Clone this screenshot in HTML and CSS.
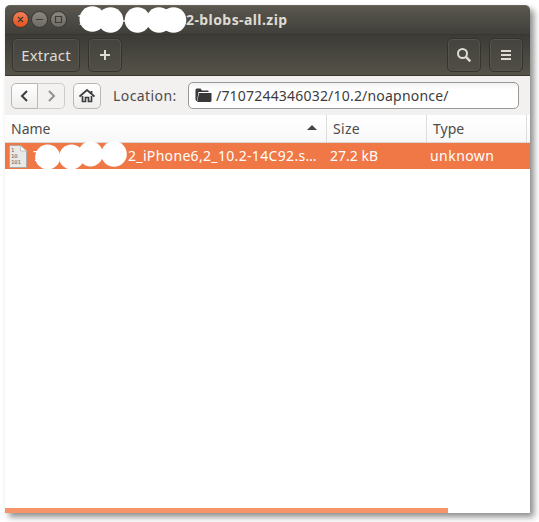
FILE: index.html
```html
<!DOCTYPE html>
<html lang="en">
<head>
<meta charset="utf-8">
<title>Archive Manager</title>
<link rel="stylesheet" href="styles.css">
</head>
<body>
<main class="window">
  <header class="titlebar">
    <svg class="controls" width="56" height="18" viewBox="0 0 56 18">
      <defs>
        <linearGradient id="close" x2="0" y2="1"><stop stop-color="#f58058"/><stop offset="1" stop-color="#e4501e"/></linearGradient>
        <linearGradient id="gray" x2="0" y2="1"><stop stop-color="#8b8981"/><stop offset="1" stop-color="#6c6a62"/></linearGradient>
      </defs>
      <g stroke="#35342f">
        <circle cx="8.5" cy="8.5" r="8" fill="url(#close)"/>
        <circle cx="27.5" cy="8.5" r="8" fill="url(#gray)"/>
        <circle cx="46.500" cy="8.5" r="8" fill="url(#gray)"/>
      </g>
      <path d="M6 6l5 5M11 6l-5 5M24 8.500h7M43.500 5.500h6v6h-6z" fill="none" stroke="#3c3b37" stroke-width="1.2"/>
    </svg>
    <div class="title"><span class="first">7</span><span class="title-rest">2-blobs-all.zip</span>
      <svg class="title-mask" width="108" height="28" viewBox="79 5 108 28" fill="#fff"><path d="M122 20h4v2h-4z" fill="#c4c1b8"/><circle cx="92.300" cy="19" r="12.800"/><circle cx="110.500" cy="20" r="12.800"/><circle cx="137.500" cy="20" r="12.800"/><circle cx="159" cy="20" r="12.800"/><circle cx="173.500" cy="20" r="12.800"/></svg>
    </div>
  </header>
  <nav class="toolbar">
    <button class="tool extract"><span>Extract</span></button>
    <button class="tool add"><svg width="12" height="12" viewBox="0 0 12 12"><path d="M6 1v10M1 6h10" stroke="#dfdbd2" stroke-width="2"/></svg></button>
    <span class="spacer"></span>
    <button class="tool search"><svg width="16" height="16" viewBox="0 0 16 16" fill="none" stroke="#dfdbd2"><circle cx="6.500" cy="6.500" r="4.500" stroke-width="2"/><path d="M9.700 9.700l4.600 4.600" stroke-width="2.400"/></svg></button>
    <button class="tool menu"><svg width="10" height="10" viewBox="0 0 10 10" fill="#dfdbd2"><path d="M0 0h10v2H0zM0 4h10v2H0zM0 8h10v2H0z"/></svg></button>
  </nav>
  <section class="location">
    <div class="history">
      <button class="nav back"><svg width="10" height="12" viewBox="0 0 10 12"><path d="M7 1L2 6l5 5" fill="none" stroke="#3d3d3d" stroke-width="2"/></svg></button>
      <button class="nav forward"><svg width="10" height="12" viewBox="0 0 10 12"><path d="M3 1l5 5-5 5" fill="none" stroke="#929292" stroke-width="2"/></svg></button>
    </div>
    <button class="nav home"><svg width="16" height="14" viewBox="0 0 16 14"><path d="M.5 7.500L8 1l7.500 6.500M12.500 2v3" fill="none" stroke="#3d3d3d" stroke-width="1.800"/><path d="M3.500 7v5.500h3V8.500h3v4h3V7" fill="none" stroke="#3d3d3d" stroke-width="1.700"/></svg></button>
    <span class="label">Location:</span>
    <div class="entry">
      <svg width="17" height="15" viewBox="0 0 17 15" fill="#393939"><path d="M.5 1.500L1.500.5h4l1.500 2h6.500v1.500H3.500L2 13H1.500L.5 12z"/><path d="M4 5H16.500v8l-1 1H2.200z"/></svg>
      <span class="path">/7107244346032/10.2/noapnonce/</span>
    </div>
  </section>
  <section class="list">
    <div class="row head">
      <div class="cell"><span class="h-name">Name</span><svg class="sort" width="10" height="5" viewBox="0 0 10 5"><path d="M0 5L5 0l5 5z" fill="#444"/></svg></div>
      <div class="cell"><span class="h-size">Size</span></div>
      <div class="cell"><span class="h-type">Type</span></div>
      <div class="cell"></div>
    </div>
    <div class="row item">
      <div class="file">
        <svg class="file-icon" width="18" height="23" viewBox="0 0 18 23"><path d="M.5.500h11l6 5.500v16.500H.5z" fill="#e9e9e7" stroke="#aaa9a5"/><path d="M11.500.5V6h6z" fill="#fff" stroke="#b8b7b3" stroke-width=".8"/><g fill="#666" class="bits"><text x="2" y="6.500">1</text><text x="2" y="13">10</text><text x="2" y="19">101</text></g></svg>
        <span class="first">7</span><span class="file-rest">2_iPhone6,2_10.2-14C92.s…</span>
        <svg class="file-mask" width="94" height="29" viewBox="34 141 94 29" fill="#fff"><circle cx="47.700" cy="157" r="12.500"/><circle cx="71.500" cy="157" r="12.500"/><circle cx="90.500" cy="154" r="12.500"/><circle cx="114" cy="154" r="12.800"/></svg>
      </div>
      <span class="size">27.2 kB</span>
      <span class="type">unknown</span>
    </div>
  </section>
  <div class="progress"></div>
</main>
</body>
</html>
```
FILE: styles.css
```css
* { box-sizing: border-box; }
body {
  margin: 0;
  padding: 5px;
  height: 522px;
  overflow: hidden;
  background: #fff;
  font: 14px/20px "Noto Sans", "Open Sans", sans-serif;
  color: #4c4c4c;
}
.window {
  display: flex;
  flex-direction: column;
  width: 525px;
  height: 508px;
  background: #fff;
  border-radius: 5px 5px 0 0;
  box-shadow: 4px 4px 6px rgba(0, 0, 0, .45);
}
button { font: inherit; padding: 0; }
svg { display: block; flex: none; }
span { white-space: nowrap; }

.titlebar {
  display: flex;
  height: 29px;
  border-top: 1px solid #68665c;
  border-radius: 5px 5px 0 0;
  background: linear-gradient(#59574e, #403f3a);
  color: #dfdbd2;
}
.controls { margin: 5px 0 0 7px; }
.title {
  position: relative;
  display: flex;
  margin: 4px 0 0 10px;
  font-weight: 700;
}
.title .first { width: 108px; }
.title-rest { letter-spacing: .42px; }
.title-mask { position: absolute; left: 1px; top: -5px; }

.toolbar {
  display: flex;
  height: 42px;
  padding: 4px 7px 0;
  border-top: 1px solid #383732;
  border-bottom: 1px solid #393630;
  background: linear-gradient(#3c3b37, #555248);
}
.tool {
  display: flex;
  align-items: center;
  justify-content: center;
  width: 34px;
  height: 34px;
  margin-top: -1px;
  border: 1px solid #34332e;
  border-radius: 5px;
  background: linear-gradient(#44433e, #504e46);
  box-shadow: inset 0 0 0 1px #55534b;
  color: #dfdbd2;
}
.extract { width: 68px; margin-right: 8px; font-size: 15px; letter-spacing: .1px; }
.search { margin-right: 8px; }
.spacer { flex: 1; }

.location {
  display: flex;
  align-items: center;
  height: 39px;
  padding: 0 11px 0 6px;
  background: #f2f1f0;
}
.history { display: flex; margin-right: 8px; }
.nav {
  display: flex;
  align-items: center;
  justify-content: center;
  width: 27px;
  height: 26px;
  border: 1px solid #b9b7b5;
  background: linear-gradient(#fff, #eeedec);
}
.back { border-radius: 5px 0 0 5px; }
.forward { border-left: 0; border-radius: 0 5px 5px 0; background: #f3f2f1; border-color: #ccc; }
.home { width: 28px; border-radius: 5px; }
.label { width: 75px; margin-left: 12px; letter-spacing: .42px; }
.entry {
  display: flex;
  align-items: center;
  width: 331px;
  height: 27px;
  padding-left: 6px;
  border: 1px solid #999;
  border-radius: 5px;
  background: linear-gradient(#f2f2f2, #fff 7px);
  color: #3c3c3c;
}
.path { margin-left: 4px; letter-spacing: .2px; }

.row { display: grid; grid-template-columns: 322px 100px 100px 3px; }
.head {
  height: 28px;
  border-bottom: 1px solid #d9d8d7;
  background: linear-gradient(#fff, #f8f8f8);
}
.cell {
  display: flex;
  align-items: center;
  justify-content: space-between;
  padding-left: 6px;
  border-right: 1px solid #dedddc;
}
.cell:last-child { border: 0; padding: 0; }
.h-size { letter-spacing: .3px; }
.sort { margin: -3px 9px 0 0; }
.item {
  height: 26px;
  align-items: center;
  background: #f07746;
  color: #fff;
}
.file { position: relative; display: flex; align-items: center; height: 26px; padding-left: 4px; }
.file .first { width: 95px; margin-left: 6px; }
.file-rest { letter-spacing: .33px; }
.bits { font: 400 5.500px "DejaVu Sans Mono", monospace; }
.file-mask { position: absolute; left: 29px; top: -2px; }
.size { padding-left: 3px; }
.type { padding-left: 3px; letter-spacing: .45px; }
.progress { width: 443px; height: 5px; margin-top: auto; background: #f6946c; }
```
